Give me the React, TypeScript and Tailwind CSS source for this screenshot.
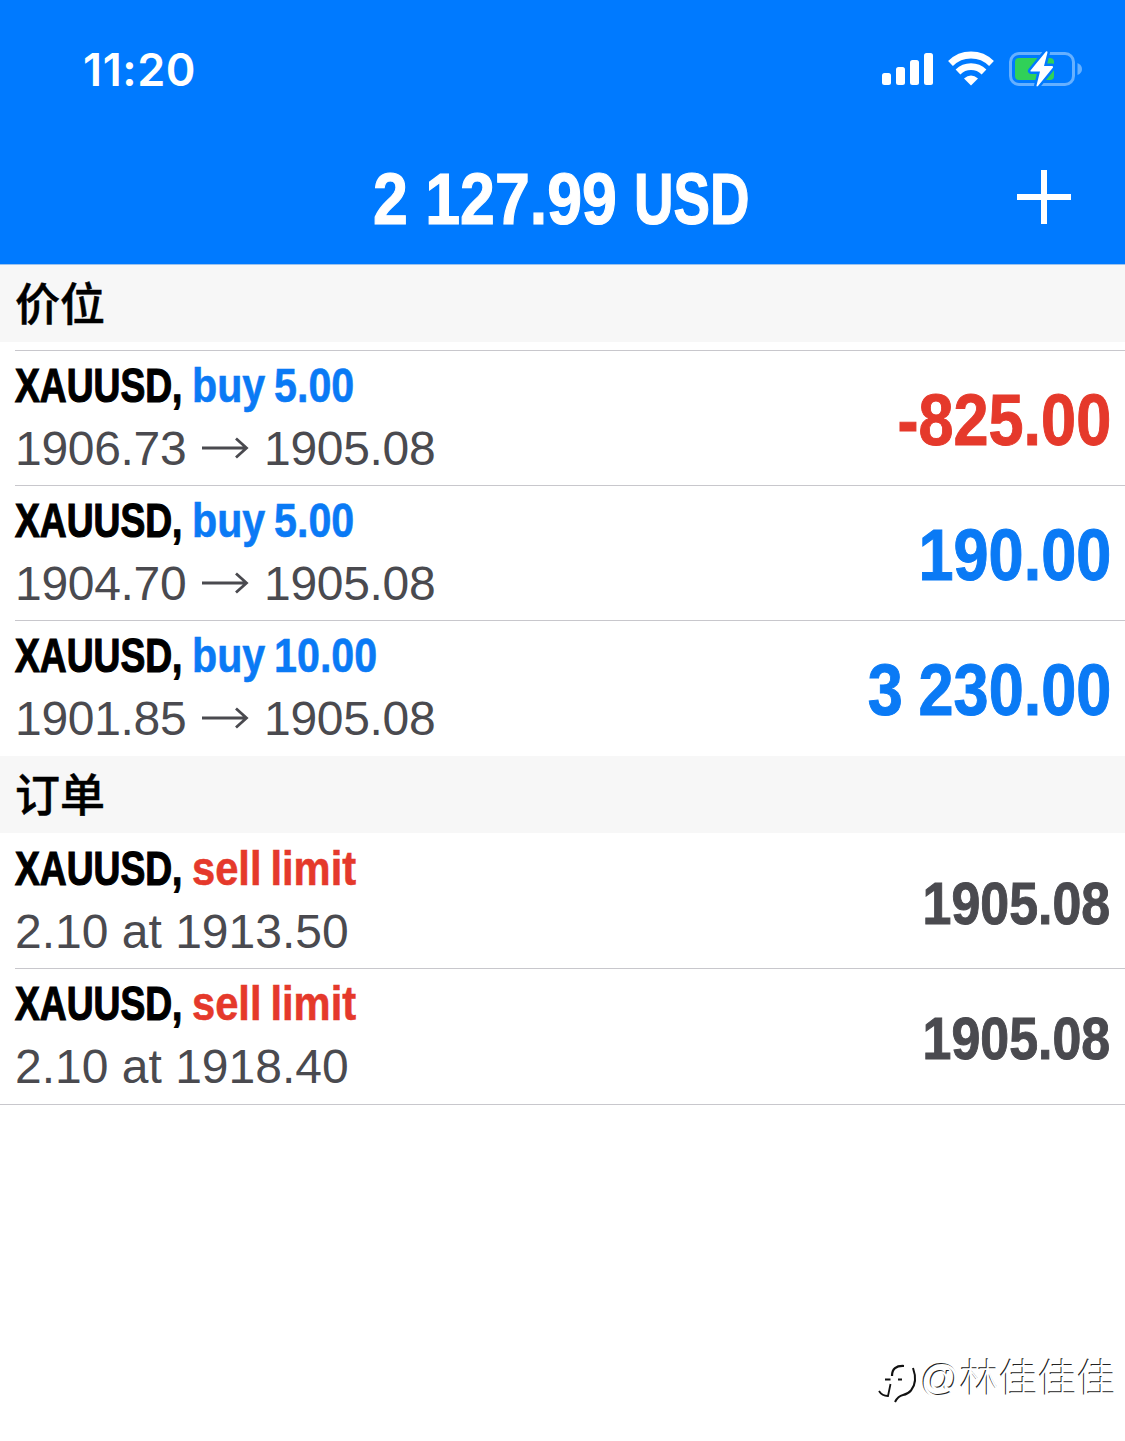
type Tone = 'blue' | 'red'

interface Position {
  action: string
  open: string
  current: string
  profit: string
  tone: Tone
}

interface Order {
  detail: string
  price: string
}

const positions: Position[] = [
  { action: 'buy 5.00', open: '1906.73', current: '1905.08', profit: '-825.00', tone: 'red' },
  { action: 'buy 5.00', open: '1904.70', current: '1905.08', profit: '190.00', tone: 'blue' },
  { action: 'buy 10.00', open: '1901.85', current: '1905.08', profit: '3 230.00', tone: 'blue' },
]

const orders: Order[] = [
  { detail: '2.10 at 1913.50', price: '1905.08' },
  { detail: '2.10 at 1918.40', price: '1905.08' },
]

const toneClass: Record<Tone, string> = {
  blue: 'text-[#0a7af5]',
  red: 'text-[#e5392b]',
}

function StatusIcons() {
  return (
    <svg width="204" height="40" viewBox="0 0 204 40" fill="none">
      {/* signal */}
      <g fill="#fff">
        <rect x="2" y="23" width="9" height="12" rx="2.5" />
        <rect x="16" y="17" width="9" height="18" rx="2.5" />
        <rect x="30" y="10" width="9" height="25" rx="2.5" />
        <rect x="44" y="3" width="9" height="32" rx="2.5" />
      </g>
      {/* wifi */}
      <g stroke="#fff" strokeWidth="6.8">
        <path d="M70.500 13.500A29 29 0 0 1 111.500 13.500" />
        <path d="M78 22A18.500 18.500 0 0 1 104 22" />
      </g>
      <path d="M91 35.500L84 28.500Q91 22.500 98 28.500Z" fill="#fff" />
      {/* battery */}
      <rect x="130.500" y="3.500" width="63" height="31" rx="8.500" stroke="#66b0ff" strokeWidth="3" />
      <path d="M197.500 13v12q4.500-2 4.500-6t-4.500-6z" fill="#66b0ff" />
      <rect x="135" y="8" width="39" height="22" rx="4" fill="#30d158" />
      <path
        d="M166 1.500L150.500 20.500Q150 21.500 151 21.500H160L156.500 35.500Q156.500 37 158 36L173 17.500Q173.500 16 172 16H164L167.500 2.500Q167.500 0.500 166 1.500Z"
        fill="#fff"
        stroke="#007aff"
        strokeWidth="5"
        strokeLinejoin="round"
        paintOrder="stroke"
      />
    </svg>
  )
}

function Arrow() {
  return (
    <svg width="48" height="24" viewBox="0 0 48 24" fill="none" stroke="#4a4a4f" strokeWidth="2.8">
      <path d="M0 11H45M34 1.500L44.500 11L34 20.500" />
    </svg>
  )
}

function SectionHeader({ title }: { title: string }) {
  return (
    <h2 className="h-[77px] bg-[#f7f7f7] pt-[3px] pl-[15px] text-[45px] leading-[75px] font-medium [-webkit-text-stroke:0.5px]">
      {title}
    </h2>
  )
}

function RowTitle({ action, tone }: { action: string; tone: Tone }) {
  return (
    <div className="flex h-[63px] text-[48px] leading-[63px] font-bold">
      <div className="w-[177px] shrink-0">
        <span className="inline-block origin-left scale-x-[0.775] text-black [-webkit-text-stroke:1.2px]">XAUUSD,</span>
      </div>
      <span
        className={`inline-block origin-left whitespace-nowrap [word-spacing:-3px] [-webkit-text-stroke:0.6px] ${tone === 'red' ? 'scale-x-[0.868]' : 'scale-x-[0.858]'} ${toneClass[tone]}`}
      >
        {action}
      </span>
    </div>
  )
}

export default function App() {
  return (
    <div className="relative min-h-[1441px] w-full bg-white font-['Liberation_Sans','Noto_Sans_CJK_SC',sans-serif] text-black">
      <header className="h-[265px] border-b border-[#9cc3ee] bg-[#007aff] text-white">
        <div className="flex h-[132px] items-start justify-between pt-[50px] pr-[41px] pl-[83px]">
          <span className="font-['Inter',sans-serif] text-[45px] leading-[40px] font-semibold tracking-[0.6px]">11:20</span>
          <StatusIcons />
        </div>
        <div className="grid h-[132px] grid-cols-[373px_1fr_108px] text-[72px] leading-[134px] font-bold">
          <h1 className="col-start-2 flex [-webkit-text-stroke:1.2px]">
            <span className="w-[261px] shrink-0">
              <span className="inline-block origin-left scale-x-[0.87] whitespace-nowrap">2 127.99</span>
            </span>
            <span className="inline-block origin-left scale-x-[0.76]">USD</span>
          </h1>
          <svg className="mt-[38px]" width="54" height="54" viewBox="0 0 54 54" stroke="#fff" strokeWidth="6">
            <path d="M0 27H54M27 0V54" />
          </svg>
        </div>
      </header>

      <section>
        <SectionHeader title="价位" />
        <div className="mt-2 ml-[15px] border-t border-[#c8c7cc]">
          {positions.map((p) => (
            <div key={p.open} className="flex h-[135px] justify-between border-b border-[#c8c7cc] pt-[3px] last:border-b-0">
              <div>
                <RowTitle action={p.action} tone="blue" />
                <div className="flex items-center text-[48px] leading-[63px] tracking-[-0.3px] text-[#4a4a4f]">
                  <span className="w-[187px]">{p.open}</span>
                  <Arrow />
                  <span className="ml-[14px]">{p.current}</span>
                </div>
              </div>
              <div
                className={`origin-right scale-x-[0.875] pr-[16px] text-[72px] leading-[132px] font-bold [word-spacing:-2px] [-webkit-text-stroke:1px] ${toneClass[p.tone]}`}
              >
                {p.profit}
              </div>
            </div>
          ))}
        </div>
      </section>

      <section>
        <SectionHeader title="订单" />
        <div className="border-b border-[#c8c7cc] pt-px">
          {orders.map((o) => (
            <div
              key={o.detail}
              className="ml-[15px] flex h-[135px] justify-between border-b border-[#c8c7cc] pt-[3px] last:border-b-0"
            >
              <div>
                <RowTitle action="sell limit" tone="red" />
                <div className="text-[48px] leading-[63px] text-[#4a4a4f]">{o.detail}</div>
              </div>
              <div className="origin-right scale-x-[0.865] pr-[17px] text-[60px] leading-[133px] font-bold text-[#4a4a4f] [-webkit-text-stroke:1px]">
                {o.price}
              </div>
            </div>
          ))}
        </div>
      </section>

      <div className="absolute top-[1355px] right-[9px] flex items-center text-[39px] leading-[48px] font-light text-white">
        <svg className="overflow-visible" width="40" height="48" viewBox="0 0 40 48" fill="none" stroke="#111" strokeWidth="2.2">
          <path d="M12 21C12 14 16 10.500 24 11M5 24.500H10.500M18 24.500H22" />
          <path d="M10.500 29L8 41Q2 41 -1 36" strokeWidth="1.8" />
          <path d="M33 13Q38 27 31 35.500Q28 39 23 40Q18 41 15 47" strokeWidth="2" />
        </svg>
        <span className="[text-shadow:-1px_-1px_0_#222]">@林佳佳佳</span>
      </div>
    </div>
  )
}
